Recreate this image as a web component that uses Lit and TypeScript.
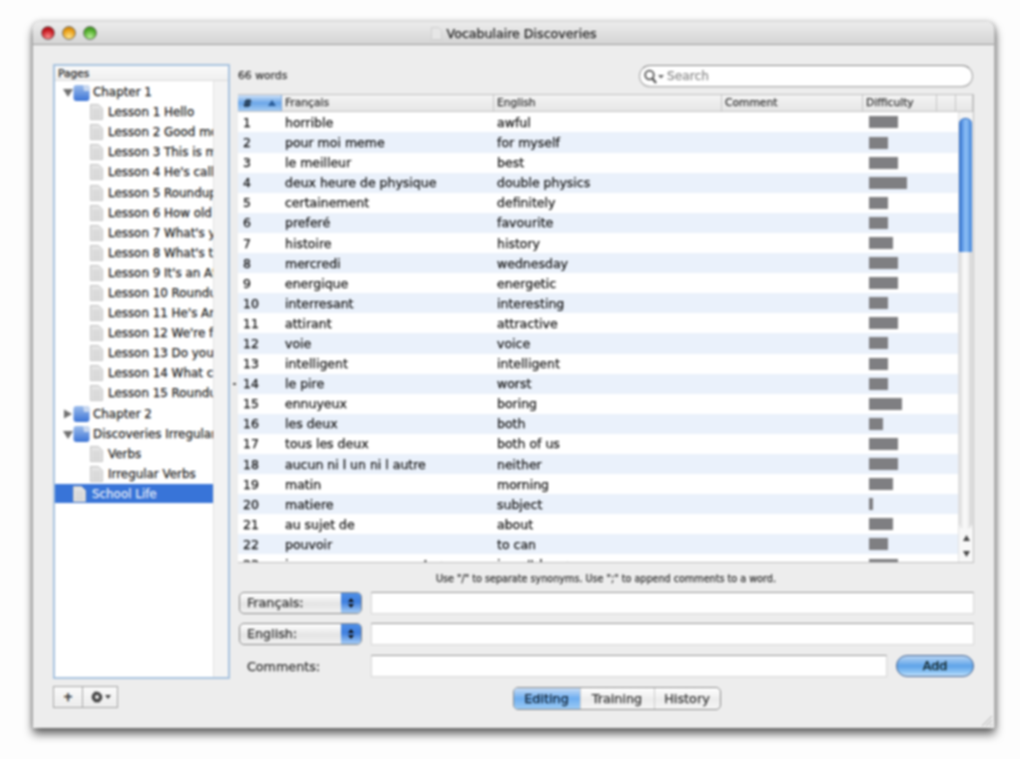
import { LitElement, html, css, svg } from "lit";
import { customElement } from "lit/decorators.js";

const words: [string, string, number][] = [
  ["horrible", "awful", 29],
  ["pour moi meme", "for myself", 19],
  ["le meilleur", "best", 29],
  ["deux heure de physique", "double physics", 38],
  ["certainement", "definitely", 19],
  ["preferé", "favourite", 19],
  ["histoire", "history", 24],
  ["mercredi", "wednesday", 29],
  ["energique", "energetic", 29],
  ["interresant", "interesting", 19],
  ["attirant", "attractive", 29],
  ["voie", "voice", 19],
  ["intelligent", "intelligent", 19],
  ["le pire", "worst", 19],
  ["ennuyeux", "boring", 33],
  ["les deux", "both", 14],
  ["tous les deux", "both of us", 29],
  ["aucun ni l un ni l autre", "neither", 29],
  ["matin", "morning", 24],
  ["matiere", "subject", 4],
  ["au sujet de", "about", 24],
  ["pouvoir", "to can", 19],
  ["je ne peux pas supporter", "i can't bear", 29],
];

const lessons = [
  "Lesson 1 Hello", "Lesson 2 Good morning", "Lesson 3 This is me", "Lesson 4 He's called", "Lesson 5 Roundup",
  "Lesson 6 How old are", "Lesson 7 What's your", "Lesson 8 What's this", "Lesson 9 It's an Atlas", "Lesson 10 Roundup",
  "Lesson 11 He's Arthur", "Lesson 12 We're from", "Lesson 13 Do you like", "Lesson 14 What color", "Lesson 15 Roundup",
];

const folder = html`<svg class="ic" width="17" height="17" viewBox="0 0 17 17"><defs><linearGradient id="fg" x1="0" y1="0" x2="0" y2="1"><stop offset="0" stop-color="#9dbdec"/><stop offset="1" stop-color="#3c74d6"/></linearGradient></defs><path d="M.5 4a3 3 0 0 1 3-3h10a3 3 0 0 1 3 3v10a3 3 0 0 1-3 3h-10a3 3 0 0 1-3-3z" fill="url(#fg)"/><path d="M10 1h3.500a3 3 0 0 1 3 3v3h-5.500z" fill="#c9d8ef"/></svg>`;
const page = html`<svg class="ic" width="13" height="16" viewBox="0 0 13 16"><path d="M.5.500h8l4 4v11H.5z" fill="#e4e4e4" stroke="#c4c4c4"/><path d="M2.500 6h8M2.500 8.500h8M2.500 11h8M2.500 13h8" stroke="#cccccc"/></svg>`;

@customElement("app-root")
export class AppRoot extends LitElement {
  static styles = css`
    :host { display: block; width: 1020px; height: 759px; background: #fdfdfd; overflow: hidden;
      font-family: "DejaVu Sans", sans-serif; color: #222; }
    .stage { padding: 22px 25px 31px 33px; height: 759px; box-sizing: border-box; }
    .win { height: 706px; display: flex; flex-direction: column; background: #ededed; border-radius: 7px 7px 0 0;
      box-shadow: 0 6px 10px rgba(0,0,0,.6), 0 0 6px rgba(0,0,0,.25); position: relative; filter: blur(.9px);
      -webkit-text-stroke: .25px currentColor; border-right: 1px solid #b5b5b5; box-sizing: border-box; }
    .title { height: 22px; flex: none; display: flex; align-items: center; position: relative; border-radius: 7px 7px 0 0;
      background: linear-gradient(#ececec, #d4d4d4); border-bottom: 1px solid #9d9d9d; justify-content: center; gap: 5px;
      font-size: 12.6px; color: #222; }
    .lights { position: absolute; left: 8px; top: 4px; display: flex; gap: 7px; }
    .dot { width: 14px; height: 14px; border-radius: 50%; border: 1px solid #777; box-sizing: border-box; }
    .r { background: radial-gradient(circle at 50% 80%, #f98a8a, #c4141c 60%, #8f1015); }
    .y { background: radial-gradient(circle at 50% 80%, #fde28a, #e89a10 60%, #b37208); }
    .g { background: radial-gradient(circle at 50% 80%, #b8f098, #4da926 60%, #2d7b14); }
    .body { flex: 1; display: flex; padding: 19px 20px 0 20px; gap: 8px; min-height: 0; }

    .left { width: 177px; flex: none; display: flex; flex-direction: column; }
    .pages { height: 615px; box-sizing: border-box; border: 2px solid #a8c3df; background: #fff; display: flex; flex-direction: column; overflow: hidden; }
    .pages-h { height: 14px; flex: none; font-size: 10.6px; line-height: 14px; padding-left: 3px; background: linear-gradient(#fafafa, #efefef); border-bottom: 1px solid #ddd; }
    .tree { flex: 1; display: flex; min-height: 0; }
    .rows { width: 158px; flex: none; padding-top: 1px; overflow: hidden; }
    .gutter { flex: 1; background: #f3f3f3; border-left: 1px solid #e2e2e2; }
    .node { height: 20.1px; display: flex; align-items: center; font-size: 11.9px; white-space: nowrap; overflow: hidden; color: #222; }
    .node .ic { flex: none; }
    .l0 { padding-left: 8px; }
    .l0 span { margin-left: 3px; }
    .l1 { padding-left: 35px; gap: 5px; }
    .sel { background: #3874d8; color: #e4ecfa; padding-left: 18px; gap: 6px; height: 19px; margin-top: .5px; }
    .actions { display: flex; margin-top: 7px; }
    .act { height: 22px; box-sizing: border-box; border: 1px solid #a5a5a5; background: linear-gradient(#fafafa, #ececec); display: flex; align-items: center; justify-content: center; font-size: 12px; }
    .act.plus { width: 30px; font-weight: bold; color: #333; }
    .act.gear { width: 35px; border-left: 0; gap: 1px; }

    .right { flex: 1; display: flex; flex-direction: column; min-width: 0; }
    .top { height: 30px; flex: none; display: flex; justify-content: space-between; align-items: flex-start; padding: 1px 1px 0 0; box-sizing: border-box; }
    .count { font-size: 10.8px; margin-top: 4px; color: #333; }
    .search { width: 334px; height: 22px; box-sizing: border-box; border: 1px solid #aaa; border-top-color: #888; border-radius: 11px; background: #fff; display: flex; align-items: center; padding-left: 3px; font-size: 12.2px; color: #8e8e8e; box-shadow: 0 1px 1px #ddd; }
    .search span { margin-left: 2px; }

    .table { height: 469px; flex: none; border: 1px solid #bdbdbd; border-top-color: #c0c0c0; border-left: 0; background: #fff; display: flex; flex-direction: column; overflow: hidden; box-sizing: border-box; }
    .thead { height: 16.4px; flex: none; display: grid; grid-template-columns: 44px 212px 228px 141px 74px 19px 1fr; background: linear-gradient(#f4f4f4, #e6e6e6); border-bottom: 1px solid #c4c4c4; font-size: 10.7px; line-height: 15px; color: #333; }
    .thead > div { border-right: 1px solid #c5c5c5; padding-left: 3px; white-space: nowrap; overflow: hidden; }
    .thead .sortc { background: linear-gradient(#cfe2f8, #6aa6e8 50%, #a6ccf3); padding: 0 5px 0 5px; display: flex; justify-content: space-between; align-items: center; border-color: #7fa9dc; color: #123; font-weight: bold; }
    .tbody { flex: 1; display: flex; min-height: 0; }
    .list { flex: 1; overflow: hidden; }
    .row { height: 20.1px; display: grid; grid-template-columns: 46px 212px 228px 141px 1fr; align-items: center; font-size: 12.5px; white-space: nowrap; color: #111; }
    .row:nth-child(even) { background: #eaf1fb; }
    .row > div { padding-left: 1px; overflow: hidden; }
    .row .n { padding-left: 5px; }
    .bar { height: 12px; background: #7f7f82; }
    .row .diff { padding: 0 0 0 4px; }
    .scroll { width: 15px; flex: none; display: flex; flex-direction: column; background: #f4f4f4; border-left: 1px solid #e2e2e2; box-sizing: border-box; }
    .track { flex: 1; padding-top: 6px; display: flex; flex-direction: column; }
    .thumb { height: 134px; width: 13px; flex: none; border-radius: 6px 6px 0 0; border-top: 1px solid #2260b8; box-sizing: border-box; background: linear-gradient(90deg, #2a68c4, #6fa8ee 35%, #8fc0f5 55%, #3c7fd8); }
    .rest { height: 277px; width: 13px; flex: none; border-radius: 0 0 6px 6px; background: linear-gradient(90deg, #d8d8d8, #fafafa 40%, #f2f2f2 70%, #c9c9c9); }
    .arrows { height: 33px; flex: none; background: #f8f8f8; display: flex; flex-direction: column; align-items: center; justify-content: space-around; font-size: 0; }

    .hint { height: 29px; flex: none; text-align: center; font-size: 9.65px; line-height: 31px; color: #333; }
    .form { display: flex; flex-direction: column; gap: 9px; }
    .fr { display: flex; height: 22px; gap: 9px; align-items: center; padding-left: 1px; }
    .fr.c { margin-top: 1px; }
    .popup { width: 123px; height: 22px; box-sizing: border-box; border: 1px solid #888; border-radius: 5px; background: linear-gradient(#fff, #e4e4e4 55%, #f2f2f2); display: flex; justify-content: space-between; font-size: 12.7px; line-height: 19px; padding-left: 7px; overflow: hidden; flex: none; color: #333; }
    .stepper { width: 20px; background: linear-gradient(#4f8fe6, #3f7fdf 45%, #a6cdf5); display: flex; align-items: center; justify-content: center; }
    .inp { flex: 1; height: 22px; box-sizing: border-box; background: #fff; border: 1px solid #dcdcdc; border-top: 1px solid #9a9a9a; box-shadow: 0 0 1px #ccc; }
    .lab { width: 123px; flex: none; font-size: 12.7px; padding-left: 8px; box-sizing: border-box; color: #333; }
    .add { width: 78px; height: 22px; box-sizing: border-box; border-radius: 11px; flex: none; border: 1px solid #44628f; background: linear-gradient(#b9d6f5, #5ea3e8 50%, #8cc4f4 80%, #c4e2fb); text-align: center; font-size: 12.7px; line-height: 20px; color: #122; }
    .seg-wrap { display: flex; justify-content: center; margin-top: 10px; padding-left: 21px; }
    .seg { display: flex; height: 23px; box-sizing: border-box; border: 1px solid #8a8a8a; border-radius: 5px; overflow: hidden; font-size: 12.8px; line-height: 21px; color: #333; background: linear-gradient(#fff, #ececec 55%, #f6f6f6); }
    .seg div { text-align: center; border-right: 1px solid #ccc; box-sizing: border-box; }
    .seg div:last-child { border-right: 0; }
    .seg .on { background: linear-gradient(#c6dcf6, #6eaef0 50%, #9ccbf5); color: #123; width: 67px; }
    .seg .tr { width: 74px; }
    .seg .hi { width: 65px; }
    .grip { position: absolute; right: 1px; bottom: 1px; }
    .split { position: absolute; left: 200px; top: 361px; width: 3px; height: 1.500px; background: #555; }
  `;

  private tri(open: boolean) {
    return html`<svg class="ic" width="10" height="12" viewBox="0 0 10 12">${open
      ? svg`<path d="M0 3h10L5 11z" fill="#707070"/>`
      : svg`<path d="M1 1.500l8 4.500-8 4.500z" fill="#707070"/>`}</svg>`;
  }

  render() {
    const step = html`<div class="stepper"><svg width="6" height="12" viewBox="0 0 6 12"><path d="M0 5l3-4 3 4zM0 7l3 4 3-4z" fill="#111"/></svg></div>`;
    return html`<div class="stage"><div class="win">
      <div class="title">
        <div class="lights"><div class="dot r"></div><div class="dot y"></div><div class="dot g"></div></div>
        <svg width="11" height="13" viewBox="0 0 11 13"><path d="M.5.500h7l3 3v9H.5z" fill="#e6e6e6" stroke="#cfcfcf"/></svg>
        <span>Vocabulaire Discoveries</span>
      </div>
      <div class="body">
        <div class="left">
          <div class="pages">
            <div class="pages-h">Pages</div>
            <div class="tree">
              <div class="rows">
                <div class="node l0">${this.tri(true)}${folder}<span>Chapter 1</span></div>
                ${lessons.map((l) => html`<div class="node l1">${page}<span>${l}</span></div>`)}
                <div class="node l0">${this.tri(false)}${folder}<span>Chapter 2</span></div>
                <div class="node l0">${this.tri(true)}${folder}<span>Discoveries Irregular Verbs</span></div>
                <div class="node l1">${page}<span>Verbs</span></div>
                <div class="node l1">${page}<span>Irregular Verbs</span></div>
                <div class="node sel">${page}<span>School Life</span></div>
              </div>
              <div class="gutter"></div>
            </div>
          </div>
          <div class="actions">
            <div class="act plus">+</div>
            <div class="act gear">
              <svg width="14" height="14" viewBox="0 0 14 14"><path d="M7 1l1 1.600 1.800-.5.500 1.800 1.800.5-.5 1.800L13 7l-1.400 1.300.5 1.800-1.800.5-.5 1.800-1.800-.5L7 13l-1-1.100-1.800.5-.5-1.800-1.800-.5.5-1.800L1 7l1.400-1.300-.5-1.800 1.800-.5.500-1.800 1.800.5z" fill="#444"/><circle cx="7" cy="7" r="2" fill="#eee"/></svg>
              <svg width="6" height="4" viewBox="0 0 6 4"><path d="M0 0h6L3 4z" fill="#444"/></svg>
            </div>
          </div>
        </div>
        <div class="right">
          <div class="top">
            <div class="count">66 words</div>
            <div class="search">
              <svg width="22" height="15" viewBox="0 0 22 15"><circle cx="6.500" cy="6" r="4.300" fill="none" stroke="#555" stroke-width="1.800"/><path d="M9.500 9.500l3.500 4.500" stroke="#555" stroke-width="2.200"/><path d="M15 6h6l-3 3.500z" fill="#666"/></svg>
              <span>Search</span>
            </div>
          </div>
          <div class="table">
            <div class="thead">
              <div class="sortc"><span>#</span><svg width="8" height="6" viewBox="0 0 8 6"><path d="M0 6l4-6 4 6z" fill="#2a5c98"/></svg></div>
              <div>Français</div><div>English</div><div>Comment</div><div>Difficulty</div><div></div><div></div>
            </div>
            <div class="tbody">
              <div class="list">
                ${words.map(([a, b, w], i) => html`<div class="row">
                  <div class="n">${i + 1}</div><div>${a}</div><div>${b}</div><div></div>
                  <div class="diff"><div class="bar" style="width:${w}px"></div></div>
                </div>`)}
              </div>
              <div class="scroll">
                <div class="track"><div class="thumb"></div><div class="rest"></div></div>
                <div class="arrows">
                  <svg width="7" height="6" viewBox="0 0 7 6"><path d="M0 6l3.500-6L7 6z" fill="#444"/></svg>
                  <svg width="7" height="6" viewBox="0 0 7 6"><path d="M0 0l3.500 6L7 0z" fill="#444"/></svg>
                </div>
              </div>
            </div>
          </div>
          <div class="hint">Use "/" to separate synonyms. Use ";" to append comments to a word.</div>
          <div class="form">
            <div class="fr"><div class="popup"><span>Français:</span>${step}</div><div class="inp"></div></div>
            <div class="fr"><div class="popup"><span>English:</span>${step}</div><div class="inp"></div></div>
            <div class="fr c"><div class="lab">Comments:</div><div class="inp"></div><div class="add">Add</div></div>
          </div>
          <div class="seg-wrap"><div class="seg">
            <div class="on">Editing</div><div class="tr">Training</div><div class="hi">History</div>
          </div></div>
        </div>
      </div>
      <div class="split"></div>
      <svg class="grip" width="13" height="13" viewBox="0 0 13 13"><path d="M12 2L2 12M12 6L6 12M12 10l-2 2" stroke="#aaa"/></svg>
    </div></div>`;
  }
}
